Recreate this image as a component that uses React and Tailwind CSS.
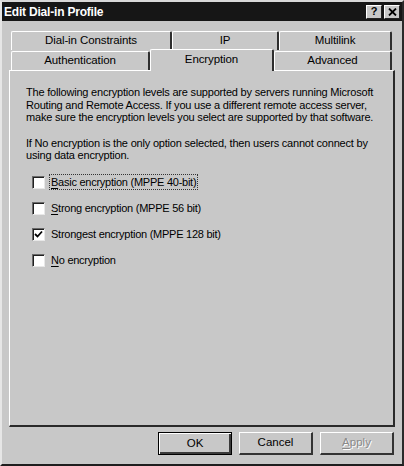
import React from 'react'

const font = { fontFamily: '"Liberation Sans", Arial, sans-serif' }

function Tab({ label, width, selected = false }) {
  return (
    <div
      className={`flex items-center justify-center bg-[#c8c8c8] border-t border-l border-white border-r-2 border-r-[#2e2e2e] rounded-t-[2px] text-[11.5px] tracking-[-0.1px] text-black ${
        selected ? 'h-[22px] relative z-10 -mb-[1px] pb-[2px]' : 'h-[19px]'
      }`}
      style={{ width }}
    >
      {label}
    </div>
  )
}

function Check({ label, ul, checked = false, focus = false }) {
  const first = label.slice(0, 1)
  const rest = label.slice(1)
  return (
    <div className="flex items-center h-[13px]">
      <div className="w-[13px] h-[13px] bg-white border-t border-l border-[#6a6a6a] border-r border-b border-r-[#e8e8e8] border-b-[#e8e8e8] flex items-center justify-center shadow-[inset_1px_1px_0_#202020]">
        {checked && (
          <svg width="9" height="9" viewBox="0 0 9 9">
            <path d="M1 4 L3.5 6.5 L8 1.5" stroke="#000" strokeWidth="1.8" fill="none" />
          </svg>
        )}
      </div>
      <span
        className={`ml-[5px] text-[11px] tracking-[-0.25px] leading-[14px] text-black px-[1px] whitespace-nowrap ${focus ? 'outline outline-1 outline-dotted outline-[#333]' : ''}`}
      >
        {ul ? (
          <>
            <span className="underline underline-offset-2">{first}</span>
            {rest}
          </>
        ) : (
          label
        )}
      </span>
    </div>
  )
}

function Button({ children, def = false, disabled = false }) {
  return (
    <div
      className={`w-[74px] h-[23px] flex items-center justify-center text-[11.5px] bg-[#c8c8c8] ${
        def
          ? 'border border-black shadow-[inset_1px_1px_0_#fff,inset_-2px_-2px_0_#3a3a3a]'
          : 'border-t border-l border-white border-r-2 border-b-2 border-r-[#333] border-b-[#333]'
      } ${disabled ? 'text-[#8a8a8a] [text-shadow:1px_1px_0_#fff]' : 'text-black'}`}
    >
      {children}
    </div>
  )
}

export default function App() {
  return (
    <div
      className="w-[404px] h-[466px] bg-[#c8c8c8] border-l-2 border-t-2 border-l-[#e6e6e6] border-t-[#d8d8d8] border-r-2 border-r-[#2a2a2a] border-b-2 border-b-[#1e1e1e] flex flex-col"
      style={font}
    >
      {/* title bar */}
      <div className="h-[19px] bg-[#161616] flex items-center justify-between pl-[2px] pr-[2px]">
        <span className="text-white font-bold text-[12px] tracking-[-0.2px]">Edit Dial-in Profile</span>
        <div className="flex gap-[2px]">
          <div className="w-[16px] h-[14px] bg-[#c8c8c8] border-t border-l border-white border-r border-b border-r-[#222] border-b-[#222] flex items-center justify-center text-[11px] font-bold text-black leading-none">
            ?
          </div>
          <div className="w-[16px] h-[14px] bg-[#c8c8c8] border-t border-l border-white border-r border-b border-r-[#222] border-b-[#222] flex items-center justify-center">
            <svg width="9" height="8" viewBox="0 0 9 8">
              <path d="M1 0.5 L8 7.5 M8 0.5 L1 7.5" stroke="#000" strokeWidth="1.8" />
            </svg>
          </div>
        </div>
      </div>

      {/* tabs + panel */}
      <div className="px-[7px] pt-[10px]">
        <div className="flex pl-[2px]">
          <Tab label="Dial-in Constraints" width={161} />
          <Tab label="IP" width={107} />
          <Tab label="Multilink" width={113} />
        </div>
        <div className="flex items-end pl-[2px] h-[20px]">
          <Tab label="Authentication" width={139} />
          <Tab label="Encryption" width={124} selected />
          <Tab label="Advanced" width={118} />
        </div>
        <div className="h-[357px] border-t border-l border-white border-r-2 border-b-2 border-r-[#2a2a2a] border-b-[#2a2a2a] pl-[16px] pt-[15px] text-[11px] tracking-[-0.2px] leading-[12.5px] text-black whitespace-nowrap">
          <p>
            The following encryption levels are supported by servers running Microsoft
            <br />
            Routing and Remote Access. If you use a different remote access server,
            <br />
            make sure the encryption levels you select are supported by that software.
          </p>
          <p className="mt-[13px]">
            If No encryption is the only option selected, then users cannot connect by
            <br />
            using data encryption.
          </p>
          <div className="flex flex-col gap-[13px] mt-[14px] pl-[6px]">
            <Check label="Basic encryption (MPPE 40-bit)" ul focus />
            <Check label="Strong encryption (MPPE 56 bit)" ul />
            <Check label="Strongest encryption (MPPE 128 bit)" checked />
            <Check label="No encryption" ul />
          </div>
        </div>
      </div>

      {/* buttons */}
      <div className="flex justify-end gap-[7px] pr-[8px] mt-[5px]">
        <Button def>OK</Button>
        <Button>Cancel</Button>
        <Button disabled>
          <span>
            <span className="underline underline-offset-2">A</span>pply
          </span>
        </Button>
      </div>
    </div>
  )
}
